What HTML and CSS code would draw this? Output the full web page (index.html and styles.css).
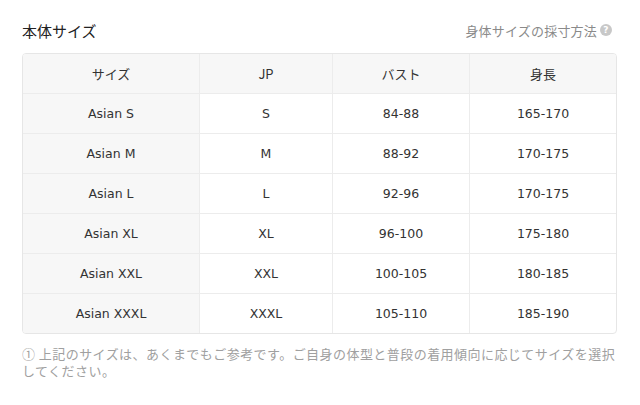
FILE: index.html
```html
<!DOCTYPE html>
<html lang="ja">
<head>
<meta charset="utf-8">
<link rel="stylesheet" href="styles.css">
</head>
<body>
<div class="wrap">
  <div class="head">
    <div class="title">本体サイズ</div>
    <div class="link">身体サイズの採寸方法<span class="q">?</span></div>
  </div>
  <div class="table">
    <div class="row hdr">
      <div class="c c1">サイズ</div><div class="c c2">JP</div><div class="c c3">バスト</div><div class="c c4">身長</div>
    </div>
    <div class="row"><div class="c c1">Asian S</div><div class="c c2">S</div><div class="c c3">84-88</div><div class="c c4">165-170</div></div>
    <div class="row"><div class="c c1">Asian M</div><div class="c c2">M</div><div class="c c3">88-92</div><div class="c c4">170-175</div></div>
    <div class="row"><div class="c c1">Asian L</div><div class="c c2">L</div><div class="c c3">92-96</div><div class="c c4">170-175</div></div>
    <div class="row"><div class="c c1">Asian XL</div><div class="c c2">XL</div><div class="c c3">96-100</div><div class="c c4">175-180</div></div>
    <div class="row"><div class="c c1">Asian XXL</div><div class="c c2">XXL</div><div class="c c3">100-105</div><div class="c c4">180-185</div></div>
    <div class="row last"><div class="c c1">Asian XXXL</div><div class="c c2">XXXL</div><div class="c c3">105-110</div><div class="c c4">185-190</div></div>
  </div>
  <p class="note">① 上記のサイズは、あくまでもご参考です。ご自身の体型と普段の着用傾向に応じてサイズを選択してください。</p>
</div>
</body>
</html>
```
FILE: styles.css
```css
html, body { margin: 0; padding: 0; background: #fff; }
body { font-family: "DejaVu Sans", "Noto Sans CJK JP", sans-serif; color: #333; }
.wrap { padding: 19px 24px 0 22px; }
.head { display: flex; justify-content: space-between; align-items: center; height: 22px; margin-bottom: 12px; }
.title { font-size: 15px; color: #222; font-family: "Noto Sans CJK JP", sans-serif; }
.link { font-size: 13px; color: #8a8a8a; display: flex; align-items: center; margin-right: 4px; font-family: "Noto Sans CJK JP", sans-serif; letter-spacing: 0.2px; }
.q { display: inline-block; width: 12px; height: 12px; border-radius: 50%; background: #c8c8c8; color: #fff; font-size: 9px; line-height: 12px; text-align: center; margin-left: 3px; font-weight: bold; font-family: "DejaVu Sans", sans-serif; }
.table { border: 1px solid #e6e6e6; border-radius: 4px; overflow: hidden; width: 593px; }
.row { display: grid; grid-template-columns: 177px 133px 137px 1fr; height: 40px; border-bottom: 1px solid #ececec; box-sizing: border-box; }
.row.last { border-bottom: none; height: 39px; }
.c { display: flex; align-items: center; justify-content: center; font-size: 12.5px; color: #333; border-right: 1px solid #ececec; }
.c4 { border-right: none; }
.c1 { background: #f7f7f7; }
.hdr { background: #f7f7f7; }
.hdr .c { font-family: "Noto Sans CJK JP", sans-serif; font-size: 13px; }
.note { margin: 11px 0 0; font-size: 13px; line-height: 17px; color: #a0a0a0; width: 594px; font-family: "Noto Sans CJK JP", sans-serif; letter-spacing: 0.45px; }
```
